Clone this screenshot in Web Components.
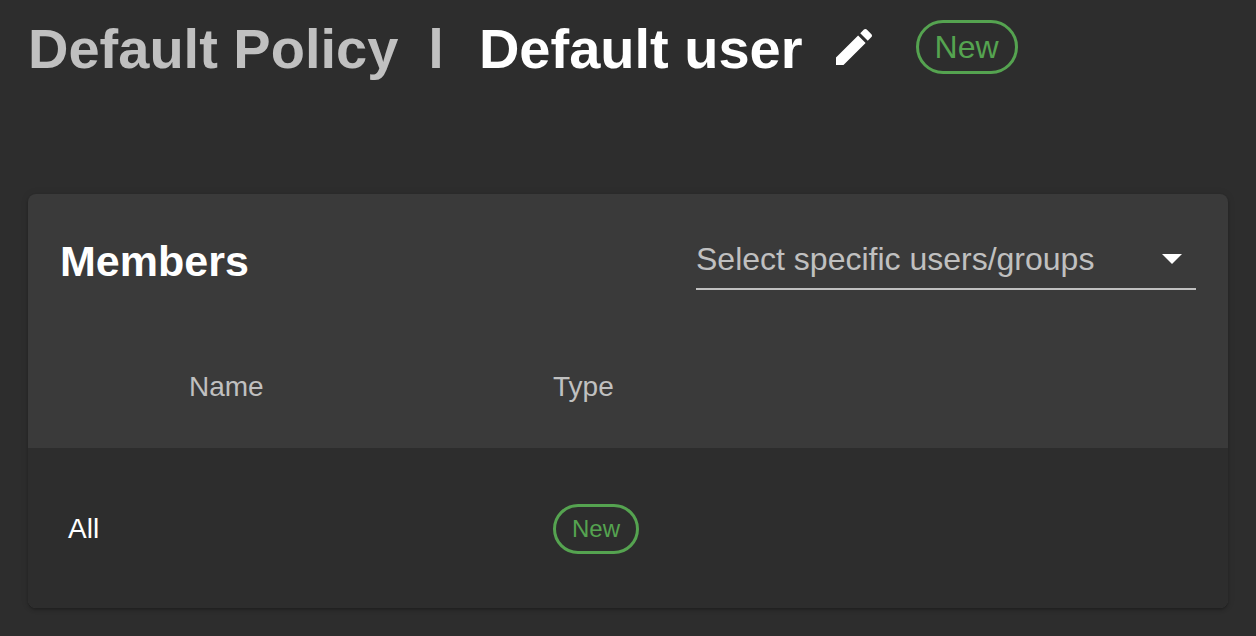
<!DOCTYPE html>
<html lang="en">
<head>
<meta charset="utf-8">
<title>Default Policy</title>
<style>
  html { background: #2d2d2d; }
  body { margin: 0; font-family: "Liberation Sans", Arial, sans-serif; color: #fff; }
</style>
</head>
<body>
<policy-page>
  <policy-header slot="header">
    <a slot="parent" href="#policy">Default Policy</a>
    <span slot="name">Default user</span>
    <status-chip slot="status" size="large">New</status-chip>
  </policy-header>
  <members-card>
    <span slot="title">Members</span>
    <group-select slot="action" label="Select specific users/groups"></group-select>
    <members-table></members-table>
  </members-card>
</policy-page>

<script>
  const component = (name, markup, ready) => {
    const template = document.createElement('template');
    template.innerHTML = markup;
    customElements.define(name, class extends HTMLElement {
      constructor() {
        super();
        this.attachShadow({ mode: 'open' }).append(template.content.cloneNode(true));
      }
      connectedCallback() {
        if (ready) ready(this);
      }
    });
  };

  component('status-chip', `
    <style>
      :host {
        display: inline-flex; align-items: center; justify-content: center;
        box-sizing: border-box; height: 50px; padding: 0 16px;
        border: 3px solid #55a350; border-radius: 25px;
        color: #55a350; font-size: 24px; line-height: 28px; font-weight: 400;
        vertical-align: middle;
      }
      :host([size="large"]) { height: 54px; padding: 0 16px; border-radius: 27px; font-size: 32px; line-height: 36px; }
    </style>
    <slot></slot>`);

  component('policy-header', `
    <style>
      :host { display: flex; align-items: center; }
      h1 { display: flex; margin: 0; padding-top: 4px; font-size: 56px; line-height: 64px; font-weight: 700; white-space: nowrap; }
      ::slotted(a) { color: #c0c0c0; text-decoration: none; }
      .divider { margin: 0 35px 0 30px; color: #c0c0c0; }
      button { display: flex; margin: 0 38px 0 27px; padding: 0; border: 0; background: none; color: inherit; cursor: pointer; }
      svg { width: 48px; height: 48px; fill: currentColor; }
    </style>
    <h1><slot name="parent"></slot><span class="divider">l</span><slot name="name"></slot></h1>
    <button type="button" aria-label="Edit name">
      <svg viewBox="0 0 24 24" aria-hidden="true"><path d="M3 17.25V21h3.75L17.81 9.94l-3.75-3.75L3 17.25zM20.71 7.04c.39-.39.39-1.02 0-1.41l-2.34-2.34c-.39-.39-1.02-.39-1.41 0l-1.83 1.83 3.75 3.75 1.83-1.83z"/></svg>
    </button>
    <slot name="status"></slot>`);

  component('group-select', `
    <style>
      :host { display: block; width: 500px; }
      .field { display: grid; align-items: center; padding-top: 2px; border-bottom: 2px solid #c0c0c0; }
      select {
        grid-area: 1 / 1; width: 100%; height: 58px; margin: 0; padding: 0 48px 0 0; border: 0;
        appearance: none; background: none; color: #c0c0c0;
        font: 400 32px/40px "Liberation Sans", Arial, sans-serif; cursor: pointer;
      }
      svg { grid-area: 1 / 1; justify-self: end; width: 20px; height: 10px; margin-right: 14px; fill: #fff; pointer-events: none; }
    </style>
    <div class="field">
      <select><option></option></select>
      <svg viewBox="0 0 20 10" aria-hidden="true"><path d="M0 0h20L10 10z"/></svg>
    </div>`,
    host => {
      const label = host.getAttribute('label');
      host.shadowRoot.querySelector('select').setAttribute('aria-label', label);
      host.shadowRoot.querySelector('option').textContent = label;
    });

  component('members-table', `
    <style>
      :host { display: block; }
      table { width: 100%; table-layout: fixed; border-collapse: collapse; font-size: 28px; line-height: 32px; }
      th, td { padding: 0 0 0 45px; text-align: left; font-weight: 400; vertical-align: middle; }
      th { height: 122px; color: #c0c0c0; }
      td { height: 158px; padding-top: 2px; }
      th:first-child { width: 40%; box-sizing: border-box; padding-left: 161px; }
      td:first-child { padding-left: 40px; }
      tbody { background: #2d2d2d; }
    </style>
    <table>
      <thead><tr><th scope="col">Name</th><th scope="col">Type</th></tr></thead>
      <tbody><tr><td>All</td><td><status-chip>New</status-chip></td></tr></tbody>
    </table>`);

  component('members-card', `
    <style>
      :host {
        display: block; overflow: hidden; border-radius: 8px; background: #3a3a3a;
        box-shadow: 0 2px 3px rgba(0, 0, 0, .25), 0 0 8px rgba(0, 0, 0, .08);
      }
      header { display: flex; align-items: center; justify-content: space-between; padding: 34px 32px 36px; }
      h2 { margin: 0; padding-top: 4px; font-size: 43px; line-height: 48px; font-weight: 700; }
    </style>
    <header><h2><slot name="title"></slot></h2><slot name="action"></slot></header>
    <slot></slot>`);

  component('policy-page', `
    <style>
      :host { display: flex; flex-direction: column; gap: 113px; padding: 13px 28px 28px; }
    </style>
    <slot name="header"></slot>
    <slot></slot>`);
</script>
</body>
</html>
